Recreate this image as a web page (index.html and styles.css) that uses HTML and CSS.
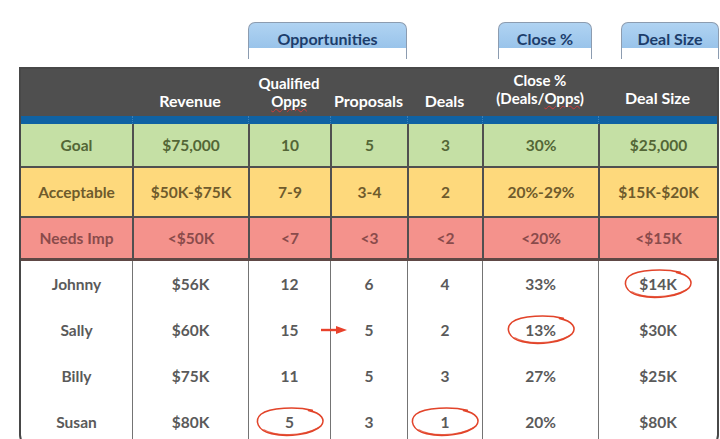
FILE: index.html
```html
<!DOCTYPE html>
<html>
<head>
<meta charset="utf-8">
<link rel="stylesheet" href="styles.css">
</head>
<body>
<div class="page">
  <div class="tabs">
    <div class="tab tab-opps">Opportunities</div>
    <div class="tab tab-close">Close %</div>
    <div class="tab tab-size">Deal Size</div>
  </div>
  <div class="sheet">
    <table class="grid">
      <colgroup>
        <col class="c1"><col class="c2"><col class="c3"><col class="c4"><col class="c5"><col class="c6"><col class="c7">
      </colgroup>
      <thead>
        <tr class="head">
          <th></th>
          <th>Revenue</th>
          <th class="two">Qualified<br><span class="spell">Opps</span></th>
          <th>Proposals</th>
          <th>Deals</th>
          <th class="two hi">Close %<br>(Deals/<span class="spell">Opps</span>)</th>
          <th class="hi">Deal Size</th>
        </tr>
        <tr class="stripe"><th></th><th></th><th></th><th></th><th></th><th></th><th></th></tr>
      </thead>
      <tbody>
        <tr class="goal">
          <td>Goal</td><td>$75,000</td><td>10</td><td>5</td><td>3</td><td>30%</td><td>$25,000</td>
        </tr>
        <tr class="ok">
          <td>Acceptable</td><td>$50K-$75K</td><td>7-9</td><td>3-4</td><td>2</td><td>20%-29%</td><td>$15K-$20K</td>
        </tr>
        <tr class="bad">
          <td>Needs Imp</td><td>&lt;$50K</td><td>&lt;7</td><td>&lt;3</td><td>&lt;2</td><td>&lt;20%</td><td>&lt;$15K</td>
        </tr>
        <tr class="rep">
          <td>Johnny</td><td>$56K</td><td>12</td><td>6</td><td>4</td><td>33%</td>
          <td><span class="mark">$14K<svg class="ring" viewBox="0 0 74 32"><path d="M60 4 C44 0 16 1 7 8 C0 14 3 25 18 28 C34 32 60 29 69 20 C74 14 70 7 56 4"/><path class="thick" d="M10 24 C22 31 50 31 66 22"/></svg></span></td>
        </tr>
        <tr class="rep">
          <td>Sally</td><td>$60K</td><td>15</td>
          <td><span class="mark">5<svg class="arrow" viewBox="0 0 26 10"><line x1="0" y1="5" x2="18" y2="5"/><polygon points="15,1 26,5 15,9"/></svg></span></td>
          <td>2</td>
          <td><span class="mark">13%<svg class="ring" viewBox="0 0 74 32"><path d="M60 4 C44 0 16 1 7 8 C0 14 3 25 18 28 C34 32 60 29 69 20 C74 14 70 7 56 4"/><path class="thick" d="M10 24 C22 31 50 31 66 22"/></svg></span></td>
          <td>$30K</td>
        </tr>
        <tr class="rep">
          <td>Billy</td><td>$75K</td><td>11</td><td>5</td><td>3</td><td>27%</td><td>$25K</td>
        </tr>
        <tr class="rep">
          <td>Susan</td><td>$80K</td>
          <td><span class="mark">5<svg class="ring" viewBox="0 0 74 32"><path d="M60 4 C44 0 16 1 7 8 C0 14 3 25 18 28 C34 32 60 29 69 20 C74 14 70 7 56 4"/><path class="thick" d="M10 24 C22 31 50 31 66 22"/></svg></span></td>
          <td>3</td>
          <td><span class="mark">1<svg class="ring" viewBox="0 0 74 32"><path d="M60 4 C44 0 16 1 7 8 C0 14 3 25 18 28 C34 32 60 29 69 20 C74 14 70 7 56 4"/><path class="thick" d="M10 24 C22 31 50 31 66 22"/></svg></span></td>
          <td>20%</td><td>$80K</td>
        </tr>
      </tbody>
    </table>
  </div>
</div>
</body>
</html>
```

FILE: styles.css
```css
* { box-sizing: border-box; }
html, body { margin: 0; padding: 0; background: #fff; overflow: hidden; }
body { font-family: Lato, "Open Sans", "Liberation Sans", sans-serif; font-weight: 700; font-size: 15.5px; color: #595959; }

.page { padding-top: 22px; padding-left: 19px; }

.tabs {
  display: grid;
  grid-template-columns: 113px 116px 82px 77px 75px 116px 121px;
  height: 45px;
}
.tab {
  height: 37px;
  border: 1px solid #8c9cb0;
  border-bottom: none;
  border-radius: 7px 7px 0 0;
  background: linear-gradient(#fff, #fff) bottom / 100% 11px no-repeat,
              linear-gradient(#b0d3f2, #8fbde7);
  color: #1c3d6b;
  text-align: center;
  font-size: 16px;
  line-height: 16px;
  padding-top: 8px;
}
.tab-opps { grid-column: 3 / 5; }
.tab-close { grid-column: 6; margin-left: 16px; margin-right: 6px; }
.tab-size { grid-column: 7; margin-left: 23px; margin-right: 0; }

.sheet {
  width: 700px;
  border: 2px solid #484848;
  border-radius: 0 0 12px 12px;
  overflow: hidden;
}
.grid {
  width: 696px;
  table-layout: fixed;
  border-collapse: separate;
  border-spacing: 0;
}
.c1 { width: 111px; }
.c2 { width: 116px; }
.c3 { width: 82px; }
.c4 { width: 77px; }
.c5 { width: 75px; }
.c6 { width: 116px; }
.c7 { width: 119px; }

th, td { padding: 0; text-align: center; font-weight: 700; }

.head th {
  background: #4f4f4f;
  color: #fff;
  height: 47px;
  vertical-align: bottom;
  font-size: 16px;
  line-height: 17px;
  padding-bottom: 7px;
}
.head th.two { font-size: 15px; line-height: 18px; padding-bottom: 6px; }
.head th.hi { padding-bottom: 10px; }
.head th.two.hi { padding-bottom: 9px; }
.stripe th { background: #0f62a3; height: 8px; }
.stripe th + th { border-left: 1px dotted #3b7fb6; }

.spell {
  text-decoration: underline wavy #d23b3b;
  text-decoration-thickness: 1px;
  text-underline-offset: 1px;
}

.goal td, .ok td, .bad td { border-bottom: 2px solid #505050; }
.goal td + td, .ok td + td, .bad td + td { border-left: 2px solid #505050; }
.goal td { background: #c5e0a5; color: #536636; height: 44px; }
.ok td { background: #fed97c; color: #6f5b2c; height: 50px; }
.bad td { background: #f4928c; color: #8a4b4b; height: 43px; border-bottom: 3px solid #5e4845; }

.rep td { height: 46px; color: #5a5a5a; }
.rep td + td { border-left: 1px solid #747474; }

.mark { position: relative; display: inline-block; }
.ring {
  position: absolute;
  width: 72px;
  height: 31px;
  left: 50%;
  top: 50%;
  transform: translate(-50%, -50%);
  fill: none;
  stroke: #e2442a;
  stroke-width: 1.6;
  stroke-linecap: round;
  overflow: visible;
}
.ring .thick { stroke-width: 1.3; opacity: .75; }
.arrow {
  position: absolute;
  width: 26px;
  height: 10px;
  right: calc(100% + 18px);
  top: 50%;
  transform: translateY(-50%);
  stroke: #e8412b;
  stroke-width: 2.4;
  fill: #e8412b;
  overflow: visible;
}
.arrow polygon { stroke: none; }
```
